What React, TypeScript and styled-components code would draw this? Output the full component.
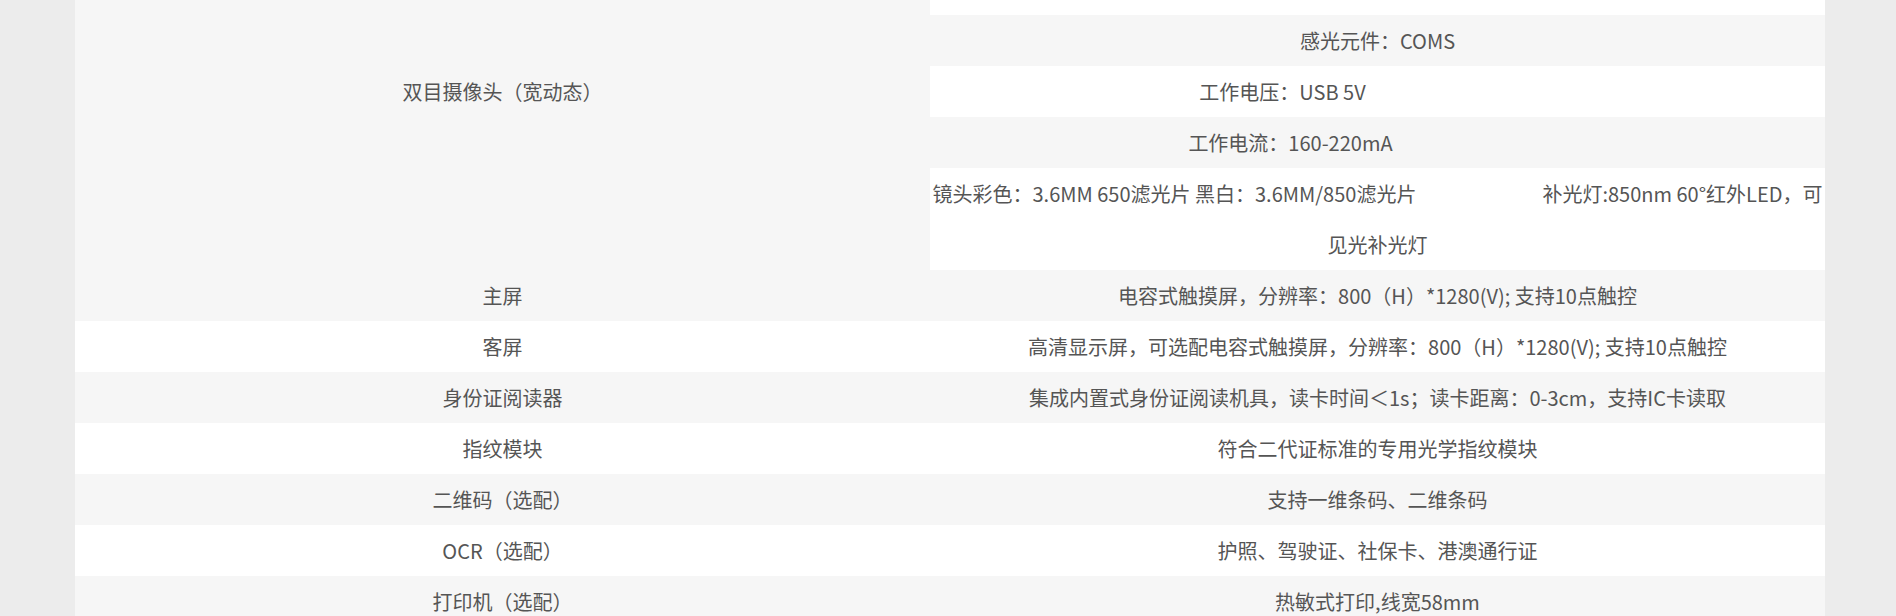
import React from "react";
import styled, { createGlobalStyle } from "styled-components";

const GlobalStyle = createGlobalStyle`
  html, body {
    margin: 0;
    padding: 0;
    background: #ececec;
    overflow: hidden;
  }
  body {
    font-family: "Noto Sans CJK SC", "Noto Sans", sans-serif;
  }
`;

const Page = styled.div`
  padding-left: 75px;
  width: 1750px;
`;

const SpecTable = styled.table`
  width: 1750px;
  margin-top: -87px;
  border-collapse: collapse;
  border-spacing: 0;
  table-layout: fixed;
  font-size: 20px;
  color: #555555;
`;

const Row = styled.tr<{ $shade: boolean }>`
  background: ${(p) => (p.$shade ? "#f6f6f6" : "#ffffff")};
`;

const Cell = styled.td<{ $trail?: number }>`
  padding: 0 ${(p) => p.$trail ?? 0}px 0 0;
  height: 51px;
  line-height: 51px;
  text-align: center;
  vertical-align: middle;
  white-space: nowrap;
`;

const NameCell = styled(Cell)`
  background: #f6f6f6;
`;

const Line = styled.div`
  display: block;
  white-space: nowrap;
  text-align: center;
`;

const Gap = styled.span<{ $w: number }>`
  display: inline-block;
  width: ${(p) => p.$w}px;
`;

type Spec = { name?: string; value: React.ReactNode; trail?: number };

const cameraValues: { value: React.ReactNode; trail?: number }[] = [
  { value: "\u00a0" },
  { value: "\u00a0" },
  { value: "感光元件：COMS" },
  { value: "工作电压：USB 5V", trail: 190 },
  { value: "工作电流：160-220mA", trail: 174 },
  {
    value: (
      <>
        <Line>
          镜头彩色：3.6MM 650滤光片 黑白：3.6MM/850滤光片
          <Gap $w={126} />
          补光灯:850nm 60°红外LED，可
        </Line>
        <Line>见光补光灯</Line>
      </>
    ),
  },
];

const specs: Spec[] = [
  { name: "主屏", value: "电容式触摸屏，分辨率：800（H）*1280(V); 支持10点触控" },
  { name: "客屏", value: "高清显示屏，可选配电容式触摸屏，分辨率：800（H）*1280(V); 支持10点触控" },
  { name: "身份证阅读器", value: "集成内置式身份证阅读机具，读卡时间＜1s；读卡距离：0-3cm，支持IC卡读取" },
  { name: "指纹模块", value: "符合二代证标准的专用光学指纹模块" },
  { name: "二维码（选配）", value: "支持一维条码、二维条码" },
  { name: "OCR（选配）", value: "护照、驾驶证、社保卡、港澳通行证" },
  { name: "打印机（选配）", value: "热敏式打印,线宽58mm" },
];

export default function App() {
  return (
    <>
      <GlobalStyle />
      <Page>
        <SpecTable>
          <colgroup>
            <col style={{ width: 855 }} />
            <col style={{ width: 895 }} />
          </colgroup>
          <tbody>
            {cameraValues.map((c, i) => (
              <Row key={`cam-${i}`} $shade={i % 2 === 0}>
                {i === 0 && (
                  <NameCell rowSpan={cameraValues.length}>双目摄像头（宽动态）</NameCell>
                )}
                <Cell $trail={c.trail}>{c.value}</Cell>
              </Row>
            ))}
            {specs.map((s, i) => (
              <Row key={`spec-${i}`} $shade={(cameraValues.length + i) % 2 === 0}>
                <Cell>{s.name}</Cell>
                <Cell $trail={s.trail}>{s.value}</Cell>
              </Row>
            ))}
          </tbody>
        </SpecTable>
      </Page>
    </>
  );
}
